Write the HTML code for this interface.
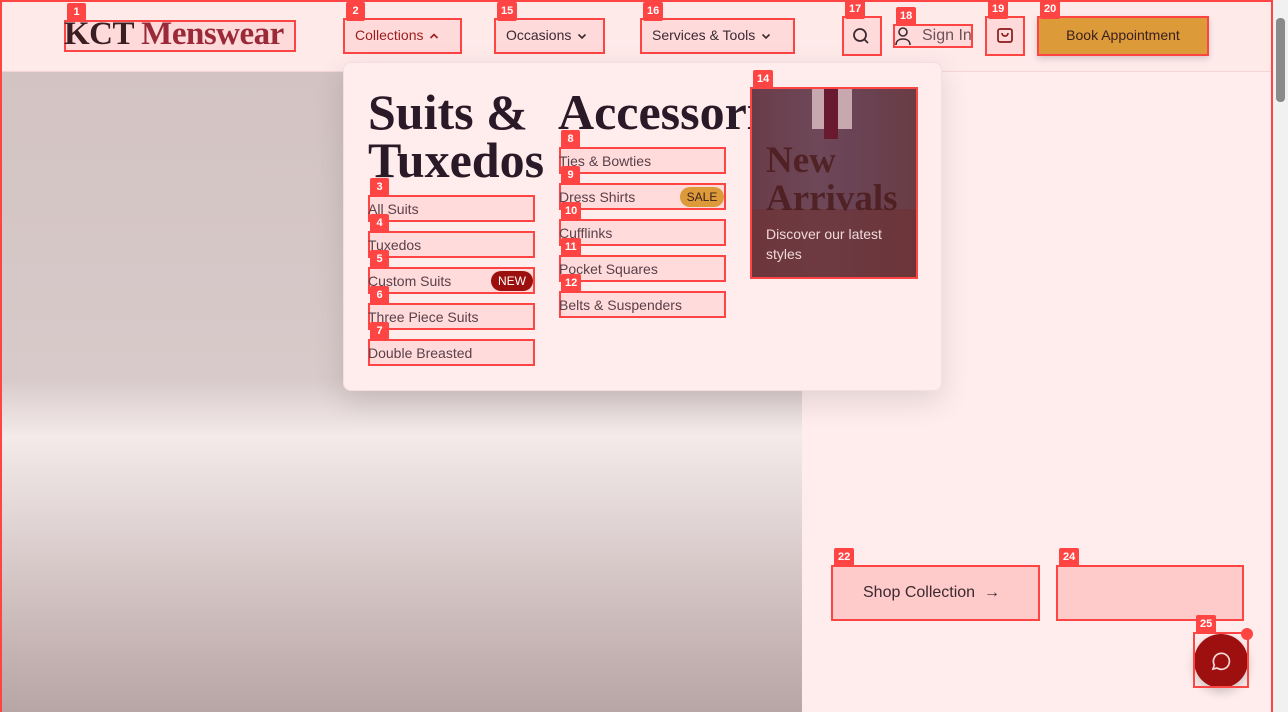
<!DOCTYPE html>
<html><head><meta charset="utf-8"><style>
*{box-sizing:border-box;margin:0;padding:0}
body{width:1288px;height:712px;overflow:hidden;background:#ffeded;font-family:"Liberation Sans",sans-serif;position:relative;color:#3a2a30}
.a{position:absolute}
.bx{position:absolute;border:2px solid #f44;background:rgba(255,190,190,.35)}
.lb{position:absolute;background:#f44;color:#fff;font:bold 11px "Liberation Sans",sans-serif;height:19px;min-width:19px;padding:0 4px;line-height:19px;text-align:center;border-radius:2px}
.serif{font-family:"Liberation Serif",serif}
.it{position:absolute;font-size:14px;color:#5a4048}
.ch{display:inline-block;vertical-align:middle;margin-left:6px}
</style></head><body>
<div class="a" style="left:0;top:0;width:1273px;height:72px;background:#ffeaea;border-bottom:1px solid #f5d5d5"></div>
<div class="a" style="left:0;top:72px;width:802px;height:640px;background:linear-gradient(180deg,#d3c3c3 0%,#d8caca 48%,#f4eaea 57%,#e4d8d8 68%,#cdbcbc 85%,#b8a5a5 100%)"></div>
<div class="a" style="left:1273px;top:0;width:15px;height:712px;background:#f1f1f1"></div>
<div class="a" style="left:1276px;top:18px;width:9px;height:84px;background:#8a8a8a;border-radius:4px"></div>
<div class="a" style="left:0;top:0;width:1273px;height:712px;border:2px solid #f44;border-bottom:none"></div>

<div class="bx" style="left:64px;top:20px;width:232px;height:32px"></div>
<div class="a serif" style="left:64px;top:16px;font-size:33px;font-weight:bold;color:#3a1e22;letter-spacing:-0.5px;white-space:nowrap">KCT <span style="color:#9b2a38">Menswear</span></div>
<div class="lb" style="left:67px;top:3px">1</div>

<div class="bx" style="left:343px;top:18px;width:119px;height:36px"></div>
<div class="a" style="left:355px;top:27px;font-size:14px;color:#9b1c1c">Collections<svg class="ch" width="10" height="10" viewBox="0 0 10 10" fill="none" stroke="#9b1c1c" stroke-width="1.6"><path d="M1.5 7l3.5-3.5L8.5 7"/></svg></div>
<div class="lb" style="left:346px;top:2px">2</div>

<div class="bx" style="left:494px;top:18px;width:111px;height:36px"></div>
<div class="a" style="left:506px;top:27px;font-size:14px;color:#3a2a30">Occasions<svg class="ch" width="10" height="10" viewBox="0 0 10 10" fill="none" stroke="#3a2a30" stroke-width="1.6"><path d="M1.5 3.5l3.5 3.5 3.5-3.5"/></svg></div>
<div class="lb" style="left:497px;top:2px">15</div>

<div class="bx" style="left:640px;top:18px;width:155px;height:36px"></div>
<div class="a" style="left:652px;top:27px;font-size:14px;color:#3a2a30">Services &amp; Tools<svg class="ch" width="10" height="10" viewBox="0 0 10 10" fill="none" stroke="#3a2a30" stroke-width="1.6"><path d="M1.5 3.5l3.5 3.5 3.5-3.5"/></svg></div>
<div class="lb" style="left:643px;top:2px">16</div>

<div class="bx" style="left:842px;top:16px;width:40px;height:40px"></div>
<svg class="a" style="left:851px;top:26px" width="20" height="20" viewBox="0 0 20 20" fill="none" stroke="#3a2a30" stroke-width="1.8"><circle cx="9" cy="9" r="6"/><path d="M13.5 13.5L17 17"/></svg>
<div class="lb" style="left:845px;top:0">17</div>

<div class="bx" style="left:893px;top:24px;width:80px;height:24px"></div>
<svg class="a" style="left:894px;top:26px" width="18" height="20" viewBox="0 0 18 20" fill="none" stroke="#3a2a30" stroke-width="1.6"><circle cx="9" cy="6" r="4"/><path d="M2 19c0-4 3-6 7-6s7 2 7 6"/></svg>
<div class="a" style="left:922px;top:27px;font-size:16px;color:#6a5258">Sign In</div>
<div class="lb" style="left:896px;top:7px">18</div>

<div class="bx" style="left:985px;top:16px;width:40px;height:40px"></div>
<svg class="a" style="left:995px;top:25px" width="20" height="20" viewBox="0 0 20 20" fill="none" stroke="#8a1a1a" stroke-width="1.7"><rect x="3" y="4" width="14" height="13" rx="2"/><path d="M7 8c0 4 6 4 6 0"/></svg>
<div class="lb" style="left:988px;top:0">19</div>

<div class="a" style="left:1037px;top:16px;width:172px;height:40px;background:#dd9a38;border:2px solid #f44;box-shadow:0 3px 6px rgba(0,0,0,.15)"></div>
<div class="a" style="left:1037px;top:27px;width:172px;text-align:center;font-size:14px;color:#3a2020">Book Appointment</div>
<div class="lb" style="left:1040px;top:0">20</div>

<div class="a" style="left:343px;top:62px;width:599px;height:329px;background:#ffecec;border-radius:8px;box-shadow:0 10px 30px rgba(0,0,0,.12);border:1px solid #f5dede"></div>
<div class="a serif" style="left:368px;top:88px;font-size:50px;line-height:48px;font-weight:bold;color:#2a1a28">Suits &amp;<br>Tuxedos</div>
<div class="a" style="left:558px;top:88px;width:192px;overflow:hidden;white-space:nowrap"><div class="serif" style="font-size:50px;line-height:48px;font-weight:bold;color:#2a1a28">Accessories</div></div>

<div class="bx" style="left:368px;top:195px;width:167px;height:27px"></div><div class="it" style="left:368px;top:201px">All Suits</div><div class="lb" style="left:370px;top:178px">3</div>
<div class="bx" style="left:368px;top:231px;width:167px;height:27px"></div><div class="it" style="left:368px;top:237px">Tuxedos</div><div class="lb" style="left:370px;top:214px">4</div>
<div class="bx" style="left:368px;top:267px;width:167px;height:27px"></div><div class="it" style="left:368px;top:273px">Custom Suits</div><div class="a" style="left:491px;top:271px;width:42px;height:20px;border-radius:10px;background:#9b0f0f;color:#fff;font-size:12px;line-height:20px;text-align:center">NEW</div><div class="lb" style="left:370px;top:250px">5</div>
<div class="bx" style="left:368px;top:303px;width:167px;height:27px"></div><div class="it" style="left:368px;top:309px">Three Piece Suits</div><div class="lb" style="left:370px;top:286px">6</div>
<div class="bx" style="left:368px;top:339px;width:167px;height:27px"></div><div class="it" style="left:368px;top:345px">Double Breasted</div><div class="lb" style="left:370px;top:322px">7</div>

<div class="bx" style="left:559px;top:147px;width:167px;height:27px"></div><div class="it" style="left:559px;top:153px">Ties &amp; Bowties</div><div class="lb" style="left:561px;top:130px">8</div>
<div class="bx" style="left:559px;top:183px;width:167px;height:27px"></div><div class="it" style="left:559px;top:189px">Dress Shirts</div><div class="a" style="left:680px;top:187px;width:44px;height:20px;border-radius:10px;background:#dd9a38;color:#3a2020;font-size:12px;line-height:20px;text-align:center">SALE</div><div class="lb" style="left:561px;top:166px">9</div>
<div class="bx" style="left:559px;top:219px;width:167px;height:27px"></div><div class="it" style="left:559px;top:225px">Cufflinks</div><div class="lb" style="left:561px;top:202px">10</div>
<div class="bx" style="left:559px;top:255px;width:167px;height:27px"></div><div class="it" style="left:559px;top:261px">Pocket Squares</div><div class="lb" style="left:561px;top:238px">11</div>
<div class="bx" style="left:559px;top:291px;width:167px;height:27px"></div><div class="it" style="left:559px;top:297px">Belts &amp; Suspenders</div><div class="lb" style="left:561px;top:274px">12</div>

<div class="a" style="left:750px;top:87px;width:168px;height:192px;border:2px solid #f44;overflow:hidden;background:linear-gradient(90deg,#6a3c4a,#6e4858 40%,#6a4456 60%,#6a3c44)">
 <div class="a" style="left:60px;top:0;width:40px;height:40px;background:#c8a8b0"></div>
 <div class="a" style="left:72px;top:0;width:14px;height:50px;background:#6a1a30"></div>
 <div class="a" style="left:0;top:120px;width:166px;height:70px;background:rgba(110,50,50,.6)"></div>
</div>
<div class="a serif" style="left:766px;top:142px;font-size:37px;line-height:38px;font-weight:bold;color:#4a1a1a;opacity:.8">New<br>Arrivals</div>
<div class="a" style="left:766px;top:224px;font-size:14px;line-height:20px;color:#f0dada">Discover our latest<br>styles</div>
<div class="lb" style="left:753px;top:70px">14</div>

<div class="a" style="left:831px;top:565px;width:209px;height:56px;background:#ffcaca;border:2px solid #f44"></div>
<div class="a" style="left:863px;top:584px;font-size:16px;color:#3a2a30">Shop Collection &nbsp;→</div>
<div class="lb" style="left:834px;top:548px">22</div>
<div class="a" style="left:1056px;top:565px;width:188px;height:56px;background:#ffcaca;border:2px solid #f44"></div>
<div class="lb" style="left:1059px;top:548px">24</div>

<div class="a" style="left:1194px;top:634px;width:54px;height:54px;border-radius:50%;background:#9e0f0f;box-shadow:0 4px 10px rgba(0,0,0,.2)"></div>
<div class="a" style="left:1193px;top:632px;width:56px;height:56px;border:2px solid #f44"></div>
<svg class="a" style="left:1209px;top:649px" width="24" height="24" viewBox="0 0 24 24" fill="none" stroke="#f5d8d8" stroke-width="1.7"><path d="M4 20l1.3-4A8 8 0 1 1 8 19z"/></svg>
<div class="a" style="left:1241px;top:628px;width:12px;height:12px;border-radius:50%;background:#f44"></div>
<div class="lb" style="left:1196px;top:615px">25</div>
</body></html>
